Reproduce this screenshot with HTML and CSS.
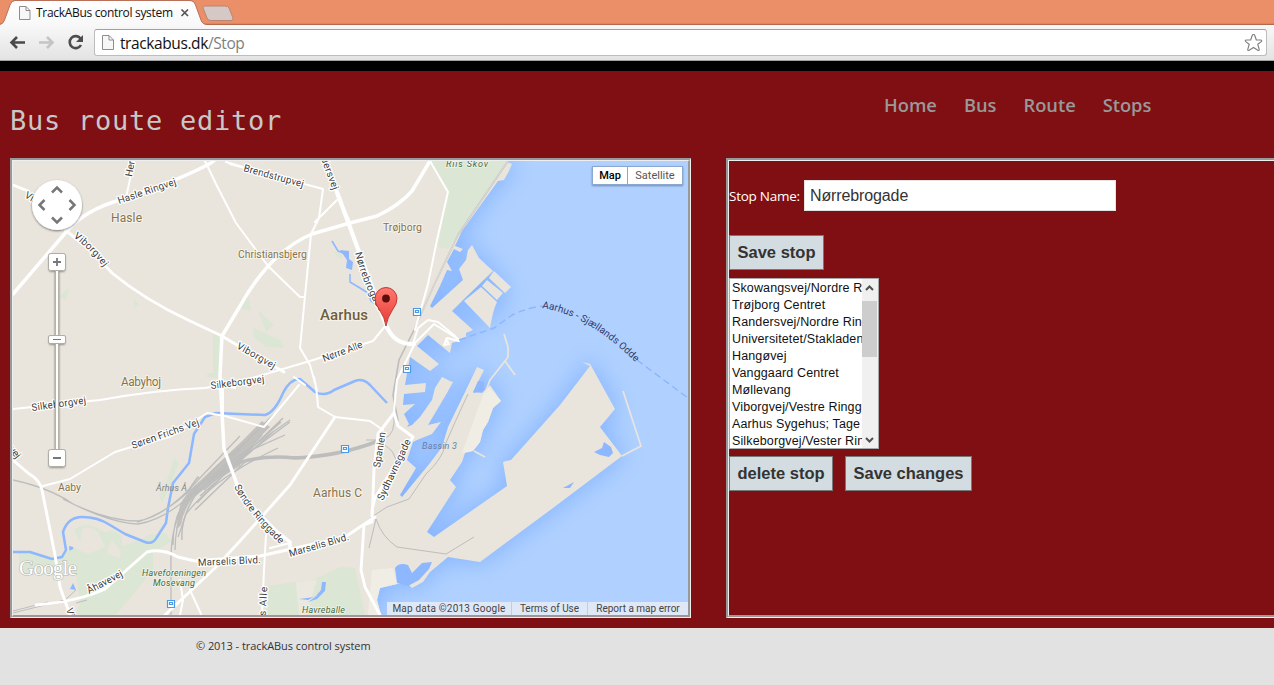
FILE: index.html
```html
<!DOCTYPE html>
<html lang="en">
<head>
<meta charset="utf-8">
<title>TrackABus control system</title>
<link rel="stylesheet" href="styles.css">
</head>
<body>
<div class="browser">
  <svg class="tabs" width="1274" height="25" viewBox="0 0 1274 25">
    <defs><linearGradient id="tabfill" x1="0" y1="0" x2="0" y2="1"><stop offset="0" stop-color="#fff"/><stop offset="1" stop-color="#f8f8f8"/></linearGradient></defs>
    <path d="M0 24.5H1274" stroke="#b4694c"/>
    <path d="M0 23.5H1274" stroke="#dc8561"/>
    <path d="M0 25V24.5Q3 24 4.500 20L10 5Q11.500 1 15 1H190Q194 1 195.500 5L201 20Q202.500 24.500 207 24.500V25Z" fill="url(#tabfill)"/>
    <path d="M0 24.500Q3 24 4.500 20L10 5Q11.500 .5 15 .5H190Q194 .5 195.500 5L201 20Q202.500 24.500 207 24.500" fill="none" stroke="#b87158"/>
    <path d="M205 6H225Q228 6 229 8L233 18Q233.500 20.500 231 20.500H211Q208 20.500 207 18L203 8Q202.500 6 205 6Z" fill="#d6c8c4" stroke="#b98573"/>
    <path d="M19.500 6.500H26L30 10.500V19.500H19.500ZM26 6.500V10.500H30" fill="#f8f8f8" stroke="#8d8d8d"/>
    <text class="tab-title" x="36" y="17" textLength="137">TrackABus control system</text>
    <path d="M181.500 9.500L188 16M188 9.500L181.500 16" stroke="#555" stroke-width="1.700"/>
  </svg>
  <div class="toolbar">
    <svg class="nav-icons" width="94" height="36" viewBox="0 25 94 36">
      <path d="M25 42.500H12M17 37L11.500 42.500L17 48" fill="none" stroke="#4a4a4a" stroke-width="2.600"/>
      <path d="M39 42.500H52M47 37L52.500 42.500L47 48" fill="none" stroke="#c4c4c4" stroke-width="2.600"/>
      <path d="M80.500 38.500A6 6 0 1 0 81 45" fill="none" stroke="#4d4d4d" stroke-width="2.600"/>
      <path d="M83 35V42H76Z" fill="#4d4d4d"/>
    </svg>
    <div class="address">
      <svg width="12" height="16" viewBox="0 0 12 16"><path d="M.5 .5H7L11.500 5V14.500H.5ZM7 .5V5H11.500" fill="#f7f7f7" stroke="#8d8d8d"/></svg>
      <span class="url">trackabus.dk<span class="path">/Stop</span></span>
      <svg class="star" width="20" height="20" viewBox="0 0 20 20"><path d="M10.500 1.500Q11.500 1.500 11.800 2.500L13.300 7H17.500Q19.500 7.300 18.200 8.600L14.800 11.300L16.200 16.300Q16.300 18 14.800 17.300L10.500 14.500L6.200 17.300Q4.700 18 4.800 16.300L6.200 11.300L2.800 8.600Q1.500 7.300 3.500 7H7.700L9.200 2.500Q9.500 1.500 10.500 1.500Z" fill="#fff" stroke="#808080" stroke-width="1.200"/></svg>
    </div>
  </div>
</div>
<div class="page">
  <header class="header">
    <h1>Bus route editor</h1>
    <nav class="menu"><a>Home</a><a>Bus</a><a>Route</a><a>Stops</a></nav>
  </header>
  <main class="main">
    <section class="frame map-frame"><div class="frame-inner map">
<svg class="map-art" width="675" height="454" viewBox="13 161 675 454">
  <defs>
    <filter id="shore" x="-10%" y="-10%" width="120%" height="120%"><feGaussianBlur stdDeviation="12"/></filter>
    <filter id="soft" x="-30%" y="-30%" width="160%" height="170%"><feDropShadow dx="0" dy="1" stdDeviation="1.300" flood-opacity=".5"/></filter>
    <linearGradient id="pin" x1="0" y1="0" x2="0" y2="1"><stop offset="0" stop-color="#ff7a70"/><stop offset="1" stop-color="#e53a34"/></linearGradient>
    <path id="coast" d="M13 161H505L512 164L509 171L504 180L498 181L462 231L455 246L463 249L460 252L454 249L447 262L452 271L447 270L440 286L430 306L432 308L463 280L459 269L466 260L468 250L472 245L479 258L493 271L463 300L452 311L473 330L466 333L466 337L459 341L452 343L450 353L428 335L417 346L439 364L430 371L410 357L405 385L426 383L425 392L404 394L403 405L415 404L404 414L409 424L407 427L412 425L420 417L432 400L435 388L442 377L450 381L453 382L447 393L428 425L441 422L432 434L417 440L413 442L407 460L416 468L400 495L402 497L430 463L442 447L448 427L466 390L477 367L484 370L473 392L482 393L490 385L501 401L493 408L488 422L483 430L480 442L473 451L465 453L462 462L450 480L456 487L427 532L434 537L507 486L503 462L506 461L511 460L560 405L590 366L582 362L590 364L594 371L615 409L600 427L622 456L553 508L480 562L448 557L430 572L423 582L412 588L407 583L397 584L380 588L377 600L381 615H13Z"/>
  </defs>
  <rect x="13" y="161" width="675" height="454" fill="#b0d1ff"/>
  <g filter="url(#shore)" opacity=".85"><use href="#coast" fill="#80b0ff" stroke="#80b0ff" stroke-width="5"/><path d="M463 300L492 272L510 287L490 328Z" fill="#80b0ff"/></g>
  <use href="#coast" fill="#e9e5dc"/>
  <path d="M464 301L481 287L497 302Q493 310 490 328ZM482 286L487 280L503 293L497 300ZM489 278L494 271L511 287L505 293Z" fill="#e9e5dc"/>
  <path d="M504 334L508 347V357L505 361L515 375M505 361L490 380L485 393M474 451L485 457M623 391L641 446L622 456" fill="none" stroke="#e9e5dc" stroke-width="1.700"/>
  <!-- harbour basins and lakes -->
  <g fill="#8db7ff">
    <path d="M594 452L602 448L604 442L611 447L613 453L609 457L600 455ZM563 488L574 482L570 488Z"/>
    <path d="M340 250L349 251V259L353 262L352 270L346 268L347 260ZM270 609L274 604L281 603L285 607L295 602L295 608L285 611L277 608L273 612ZM299 599L315 597L321 590L322 582L326 582L325 591L317 599L308 602ZM69 546L73 547L77 560L70 554ZM73 583L70 589L76 590Z"/>
    <path d="M395 568Q399 562 408 565L412 573L422 563L432 562L429 569L419 580L408 586L397 583Z"/>
    <path d="M473 393L478 381L484 382L484 391Z"/>
  </g>
  <path d="M489 387L501 401L493 408L488 422L483 430L480 442L473 451L462 453L483 395ZM372 570L393 568L397 584L380 588L377 600L381 615H368Z" fill="#f0ede4"/>
  <!-- parks -->
  <g fill="#dce6d4">
    <path d="M429 161H508L462 228L448 249L438 247L448 192Z"/>
    <path d="M213 333H219V378L206 377L208 373H213ZM59 297L70 286L66 300ZM134 299L139 304L134 308ZM240 300L249 297L251 311L242 309ZM258 310L274 325L266 332ZM253 328L281 340L284 348L266 347L254 337ZM333 252L342 253V260Z"/>
    <path d="M266 586L296 582L300 615H266ZM304 584L341 567L355 568L360 590L365 615H315Z"/>
    <path d="M74 530Q84 521 99 529Q104 535 112 530L122 536V546Q139 541 149 535L166 533L171 541L153 553V570L116 615H75L80 604L76 575H39L19 571V551L55 558L75 548L88 554L104 547L81 544Z"/>
    <path d="M174 458L179 463L174 475L170 487L162 503L159 495L169 475Z"/>
  </g>
  <path d="M82 529Q90 525 98 532L105 546L90 553L80 545ZM112 540L121 552L119 558L106 553Z" fill="#e9e5dc"/>
  <path d="M296 583L317 580L306 615H299ZM299 599L315 597L321 590L322 582L326 582L325 591L317 599L308 602Z" fill="#ebe8df"/>
  <path d="M299 599L315 597L321 590L322 582L326 582L325 591L317 599L308 602L318 595L308 600Z" fill="#8db7ff"/>
  <!-- river and streams -->
  <g fill="none" stroke="#8db7ff" stroke-linejoin="round">
    <path d="M13 552H30L52 559L62 557L66 550L63 532Q68 517 82 517Q98 517 110 525L125 534L145 542Q153 545 157 537L166 523L168 508L173 483L189 463L194 434L205 417L216 413L265 415Q275 412 283 393Q290 379 300 379L315 392Q325 397 334 390L355 381Q363 378 370 385L387 403" stroke-width="2.500"/>
    <path d="M332 241L338 251L346 254M350 274V282L360 288L368 293L371 301L376 305" stroke-width="1.500"/>
  </g>
  <!-- railways -->
  <path d="M180 505Q186 492 202 479L240 443L262 421L270 427L245 452L240 466L215 481L194 497Q184 508 181 525L176 530Z" fill="#c3c1bd"/>
  <g fill="none" stroke="#bdbdbd">
    <path d="M13 480Q50 488 73 504Q112 523 138 524Q165 520 194 492Q215 465 243 445L274 414M63 499Q105 521 138 521Q165 517 198 480L240 436M137 522Q165 514 190 490L240 462Q264 455 297 457Q330 458 380 441" stroke-width="1.300"/>
    <path d="M171 615V570Q170 535 178 518Q180 500 205 480L290 420M175 550Q175 515 194 493L290 422M173 545Q173 518 184 503L240 455L285 435M178 537L186 514Q214 478 278 448" stroke-width="1.300"/>
    <path d="M194 497L245 443M197 503L262 435M200 496L273 432M204 490L281 422M208 490L283 418M195 510L245 462M182 540Q180 515 201 487M186 494Q200 473 198 478" stroke-width="1.500"/>
    <path d="M225 468Q255 454 295 458Q340 456 378 441" stroke-width="3.500"/>
    <path d="M366 440H376Q393 440 394 423V412M378 443Q397 447 397 469L389 487M370 518L387 507L409 499L426 474Q443 458 445 445L456 420L468 394M369 548L376 519Q382 537 397 547L446 554L474 537" stroke-width="1"/>
    <path d="M508 161L458 235L435 283L414 330L399 360L393 395L398 421" stroke-width="1.600"/>
    <path d="M508 161L458 235L435 283L414 330" stroke="#fff" stroke-width=".5"/>
    <path d="M13 613L65 600L76 590M13 611L48 602M76 603L87 600" stroke-width="1"/>
  </g>
  <!-- roads -->
  <g fill="none" stroke="#fff" stroke-linejoin="round" stroke-linecap="round">
    <path d="M13 294L67 231Q85 210 120 200Q180 180 211 163L217 158M222 336L240 306Q271 251 312 234L350 223L377 216Q400 205 412 191L430 161M222 336L220 375L224 449L241 495L275 530L290 542V549" stroke-width="3.500"/>
    <path d="M337 192L386 325Q394 345 414 344" stroke-width="4.200"/>
    <path d="M350 223L338 197L328 167L322 161M394 413L378 434L374 470L372 522L364 525L361 570L365 587L380 615M372 518V510L375 498L387 478L413 437L398 426L394 413M375 517L345 537L260 556L195 561L178 557Q162 548 147 552L105 589Q80 601 36 605M55 555L42 490Q40 480 28 473L13 460M55 555L60 587L70 615M165 615L215 568L240 541L290 485L335 417M13 185L28 191M64 229L93 252L112 273Q145 300 188 320L222 336L240 347L284 372" stroke-width="2.900"/>
    <path d="M414 344L434 324L458 339M415 343L397 380L395 400L394 413M335 417L318 407Q317 390 314 377M205 161L216 184L236 223L268 266L300 297L304 297M230 164L323 189L319 218L311 234L300 348L310 365L317 390M337 200L315 222M430 161L448 192L437 240L428 284L415 330M13 409L100 400Q155 390 205 388L235 383L310 361L373 341L386 325M43 486L70 479L115 452Q140 444 170 437L207 413L225 416L264 427L299 385M294 377L305 385M335 417L370 421L383 430M266 535L264 570L262 615M180 580L183 600L180 615M190 590L201 614M125 202L134 161M226 162L253 170" stroke-width="2"/>
    <path d="M413 344L418 328L428 320L438 322L455 336L459 341L447 338L444 345L449 344L446 339M290 543L270 548M235 388L223 386L223 415" stroke-width="2"/>
  </g>
  <path d="M459 340L494 328L512 315Q530 307 543 306M637 360L688 398" fill="none" stroke="#8db5ff" stroke-width="1.400" stroke-dasharray="7 4"/>
  <!-- stations -->
  <g fill="#fff" stroke="#4a9ae8" stroke-width="1.200">
    <path id="station" d="M413.500 308.500H420.500V315.500H413.500ZM415.500 310.500H418.500V312.500H415.500Z"/>
    <use href="#station" x="-10" y="57"/><use href="#station" x="-72" y="137"/><use href="#station" x="-246" y="292"/>
  </g>
  <!-- labels -->
  <g class="road-label">
    <path id="p1" d="M119 204L178 184"/><path id="p2" d="M243 171L305 188"/><path id="p3" d="M355 253Q365 291 382 315"/>
    <path id="p4" d="M73 237Q93 252 105 269"/><path id="p5" d="M236 348L275 370"/><path id="p6" d="M324 362L364 347"/>
    <path id="p7" d="M234 487Q247 512 282 546"/><path id="p8" d="M380 468L386 430"/><path id="p9" d="M383 501L412 439"/>
    <path id="p10" d="M133 449L202 424"/><path id="p11" d="M32 411L89 403"/><path id="p12" d="M211 389L267 382"/><path id="p13" d="M198 566L263 563"/><path id="p14" d="M290 557L352 539"/><path id="p15" d="M89 594L125 575"/>
    <path id="p16" d="M542 308Q590 315 639 366"/>
    <text><textPath href="#p1" textLength="61">Hasle Ringvej</textPath></text>
    <text><textPath href="#p2" textLength="62">Brendstrupvej</textPath></text>
    <text><textPath href="#p3" textLength="64">Nørrebrogade</textPath></text>
    <text><textPath href="#p4" textLength="43">Viborgvej</textPath></text>
    <text><textPath href="#p5" textLength="43">Viborgvej</textPath></text>
    <text><textPath href="#p6" textLength="42">Nørre Alle</textPath></text>
    <text><textPath href="#p7" textLength="74">Søndre Ringgade</textPath></text>
    <text><textPath href="#p8" textLength="36">Spanien</textPath></text>
    <text><textPath href="#p9" textLength="66">Sydhavnsgade</textPath></text>
    <text><textPath href="#p10" textLength="71">Søren Frichs Vej</textPath></text>
    <text><textPath href="#p11" textLength="55">Silkeborgvej</textPath></text>
    <text><textPath href="#p12" textLength="54">Silkeborgvej</textPath></text>
    <text><textPath href="#p13" textLength="63">Marselis Blvd.</textPath></text>
    <text><textPath href="#p14" textLength="62">Marselis Blvd.</textPath></text>
    <text><textPath href="#p15" textLength="39">Åhavevej</textPath></text>
    <text class="ferry"><textPath href="#p16" textLength="110">Aarhus - Sjællands Odde</textPath></text>
    <text transform="translate(132 177) rotate(-80)">Her</text>
    <text transform="translate(319 153) rotate(70)" textLength="40">ndersvej</text>
    <text transform="translate(24 197) rotate(30)">Vib</text>
    <text transform="translate(5 445) rotate(52)">gvej</text>
    <text transform="translate(265 629) rotate(-87)" textLength="42">nds Alle</text>
    <text transform="translate(66 609) rotate(75)">Viborgvej</text>
  </g>
  <g class="place">
    <text x="111" y="222" textLength="31">Hasle</text>
    <text x="238" y="258" textLength="69" class="small">Christiansbjerg</text>
    <text x="383" y="231" textLength="39" class="small">Trøjborg</text>
    <text x="121" y="386" textLength="40">Aabyhoj</text>
    <text x="58" y="491" textLength="23" class="small">Aaby</text>
    <text x="313" y="497" textLength="49" class="medium">Aarhus C</text>
    <text x="320" y="320" textLength="48" class="city">Aarhus</text>
  </g>
  <g class="nature">
    <text x="446" y="167" textLength="42">Riis Skov</text>
    <text x="142" y="576" textLength="64">Haveforeningen</text>
    <text x="153" y="586" textLength="42">Mosevang</text>
    <text x="302" y="613" textLength="43">Havreballe</text>
    <text x="422" y="449" textLength="35" class="basin">Bassin 3</text>
    <text x="156" y="491" textLength="31" class="stream">Århus Å</text>
  </g>
  <text class="google" x="19" y="575" textLength="58">Google</text>
  <!-- marker -->
  <path d="M386 326Q385 318 379 309Q375 304 375 298.500A11 11 0 0 1 397 298.500Q397 304 393 309Q387 318 386 326Z" fill="url(#pin)" stroke="#b8302b" stroke-width=".9"/>
  <circle cx="386" cy="298.500" r="3.900" fill="#5c0e0c"/>
  <!-- pan and zoom controls -->
  <g filter="url(#soft)">
    <circle cx="57" cy="205" r="25" fill="#fff"/>
    <rect x="55" y="268" width="4" height="185" fill="#fff"/>
    <rect x="49" y="254" width="16" height="16.500" rx="1.500" fill="#fff"/>
    <rect x="49" y="336" width="16" height="7.500" rx="1" fill="#fff"/>
    <rect x="49" y="450" width="16" height="16.500" rx="1.500" fill="#fff"/>
  </g>
  <path d="M55.500 271V336M58.500 271V336M55.500 344V450M58.500 344V450" stroke="#b5b2aa"/>
  <g fill="none" stroke="#b0ada6"><rect x="48.500" y="253.500" width="17" height="17" rx="2"/><rect x="48.500" y="335.500" width="17" height="8" rx="1.500"/><rect x="48.500" y="449.500" width="17" height="17" rx="2"/></g>
  <path d="M52 192.500L57 187.500L62 192.500M52 217.500L57 222.500L62 217.500M44.500 200L39.500 205L44.500 210M69.500 200L74.500 205L69.500 210" fill="none" stroke="#777" stroke-width="2.500"/>
  <path d="M53 262H61M57 258V266M53 458H61" stroke="#777" stroke-width="1.800"/>
  <path d="M53 339.500H61" stroke="#777"/>
</svg>
      <div class="map-types"><span class="active">Map</span><span>Satellite</span></div>
      <div class="map-credits"><span>Map data ©2013 Google</span><span>Terms of Use</span><span>Report a map error</span></div>
    </div></section>
    <section class="frame form-frame"><div class="frame-inner form">
      <label class="field"><span>Stop Name:</span><input type="text" value="Nørrebrogade"></label>
      <button class="btn save">Save stop</button>
      <div class="listbox">
        <ul><li>Skowangsvej/Nordre Ringgade</li><li>Trøjborg Centret</li><li>Randersvej/Nordre Ringgade</li><li>Universitetet/Stakladen</li><li>Hangøvej</li><li>Vanggaard Centret</li><li>Møllevang</li><li>Viborgvej/Vestre Ringgade</li><li>Aarhus Sygehus; Tage Hansens</li><li>Silkeborgvej/Vester Ringgade</li></ul>
        <div class="scrollbar">
          <svg width="15" height="22" viewBox="0 0 15 22"><path d="M4 11L7.500 7.500L11 11" fill="none" stroke="#505050" stroke-width="2"/></svg>
          <i class="thumb"></i>
          <svg class="down" width="15" height="17" viewBox="0 0 15 17"><path d="M4 7L7.500 10.500L11 7" fill="none" stroke="#505050" stroke-width="2"/></svg>
        </div>
      </div>
      <div class="actions"><button class="btn delete">delete stop</button><button class="btn changes">Save changes</button></div>
    </div></section>
  </main>
</div>
<footer class="footer">© 2013 - trackABus control system</footer>
</body>
</html>
```
FILE: styles.css
```css
* { box-sizing: border-box; }
body { margin: 0; width: 1274px; height: 685px; overflow: hidden; display: flex; flex-direction: column; background: #e2e2e2; font-family: "Open Sans", "Noto Sans", sans-serif; }
svg { display: block; flex: none; }

.browser { height: 61px; background: #eb8f69; }
.tab-title { font-size: 12px; fill: #111; }
.toolbar { display: flex; align-items: flex-start; height: 36px; background: linear-gradient(#f8f8f8, #e3e3e3); border-bottom: 1px solid #a3a3a3; }
.address { display: flex; align-items: center; width: 1173px; height: 27px; margin-top: 4px; padding: 0 3px 0 7px; background: #fff; border: 1px solid #bdbdbd; border-top-color: #a0a0a0; border-radius: 3px; }
.url { flex: 1; margin-left: 6px; font-size: 15.5px; line-height: 24px; letter-spacing: -0.4px; color: #111; }
.path { color: #808080; }

.page { height: 567px; padding-left: 10px; overflow: hidden; border-top: 10px solid #000; background: #7f0f12; }
.header { display: flex; height: 87px; }
h1 { width: 874px; margin: 0; padding-top: 34px; font: 400 27px/32px "DejaVu Sans Mono", monospace; letter-spacing: 0.75px; color: #c8c8c8; }
.menu { display: flex; gap: 27px; padding-top: 21px; font-size: 18.3px; font-weight: 600; line-height: 26px; color: #999; }
.main { display: flex; gap: 35px; }

.frame { flex: none; height: 460px; border: solid; border-width: 2px 1px 1px 2px; border-color: #999 #eee #eee #999; }
.frame-inner { height: 457px; border: solid; border-width: 1px 2px 2px 1px; border-color: #eee #999 #999 #eee; }
.map-frame { width: 681px; }
.form-frame { flex: 0 0 548px; border-right: 0; }
.form-frame .frame-inner { border-right: 0; }

.map { position: relative; overflow: hidden; }
.road-label { font: 10px Roboto, sans-serif; fill: #3d3d3d; stroke: #fff; stroke-width: 2.5px; paint-order: stroke; stroke-linejoin: round; }
.road-label path { fill: none; stroke: none; }
.road-label .ferry { fill: #34386a; stroke: none; }
.place { font: 12px Roboto, sans-serif; fill: #857350; stroke: #f5f2ea; stroke-width: 2px; paint-order: stroke; }
.place .small { font-size: 10.5px; }
.place .city { font-size: 15px; font-weight: 500; fill: #6f5e3a; }
.nature { font: italic 9px Roboto, sans-serif; fill: #3f6b3d; stroke: #f0f3ea; stroke-width: 1.5px; paint-order: stroke; }
.nature .basin { fill: #6a7ea8; stroke: none; }
.nature .stream { fill: #858585; stroke: none; }
.google { font: 21px "Liberation Serif", serif; fill: #fff; stroke: #b5b5b0; stroke-width: 1.2px; paint-order: stroke; }
.map-types { position: absolute; top: 5px; right: 5px; display: flex; height: 19px; border: 1px solid #8aa8d2; background: #fff; box-shadow: 0 1px 2px rgba(0, 0, 0, .35); font: 11px/18px Roboto, sans-serif; color: #555; }
.map-types span { width: 54px; text-align: center; }
.map-types .active { width: 35px; border-right: 1px solid #8aa8d2; font-weight: 500; color: #000; }
.map-credits { position: absolute; right: 0; bottom: 0; display: flex; gap: 1px; height: 13px; font: 10px/13px Roboto, sans-serif; color: #444; }
.map-credits span { width: 100px; background: #dfe8f7; text-align: center; white-space: nowrap; }
.map-credits span:first-child { width: 124px; letter-spacing: 0.2px; }
.map-credits span:nth-child(2) { width: 75px; }

.form { display: flex; flex-direction: column; align-items: flex-start; padding-top: 19px; }
.field { display: flex; align-items: center; height: 31px; font-size: 13.5px; color: #fff; }
.field span { width: 75px; letter-spacing: -0.25px; white-space: nowrap; }
.field input { width: 312px; height: 31px; padding: 0 5px; border: 1px solid #e2e2e2; background: #fff; font: 16px "Liberation Sans", Arial, sans-serif; letter-spacing: -0.12px; color: #333; }
.btn { height: 35px; padding: 0 0 1px; border: 1px solid #787878; background: #d3dce0; font: bold 16.5px "Liberation Sans", Arial, sans-serif; color: #333; white-space: nowrap; }
.save { width: 95px; margin-top: 24px; }
.listbox { display: flex; width: 150px; height: 171px; margin-top: 8px; border: 1px solid #a9a9a9; background: #fff; }
.listbox ul { width: 132px; height: 169px; margin: 0; padding: 1px 0 0 2px; overflow: hidden; list-style: none; font: 12.5px/17px "Liberation Sans", Arial, sans-serif; letter-spacing: 0.13px; color: #111; white-space: nowrap; }
.scrollbar { display: flex; flex-direction: column; width: 16px; padding-right: 1px; background: #f0f0f0; }
.thumb { height: 56px; background: #cdcdcd; }
.down { margin-top: auto; }
.actions { display: flex; gap: 12px; margin-top: 7px; }
.delete { width: 104px; }
.changes { width: 127px; }

.footer { height: 57px; padding: 9px 0 0 196px; font-size: 11px; line-height: 18px; letter-spacing: -0.06px; color: #333; }
```
